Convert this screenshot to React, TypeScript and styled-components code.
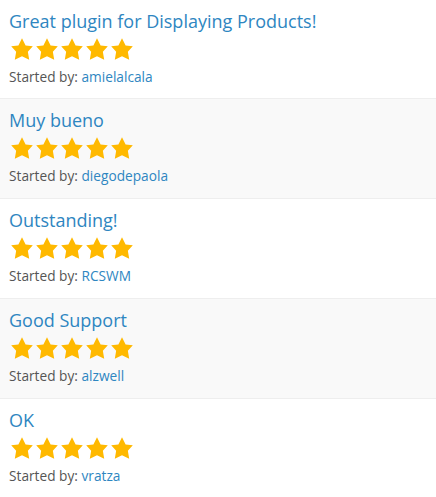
import * as React from 'react';
import styled, { createGlobalStyle } from 'styled-components';

const GlobalStyle = createGlobalStyle`
  html, body {
    margin: 0;
    padding: 0;
    background: #fff;
  }
  body {
    font-family: 'Open Sans', 'Noto Sans', sans-serif;
  }
`;

const ReviewList = styled('ul')`
  list-style: none;
  margin: 0;
  padding: 0;
  width: 436px;
`;

const ReviewItem = styled('li')`
  box-sizing: border-box;
  height: 100px;
  padding: 8px 9px 0;
  border-bottom: 1px solid #eee;
  &:first-child {
    height: 99px;
  }
  &:nth-child(even) {
    background: #f9f9f9;
  }
`;

const Title = styled('a')`
  display: block;
  font-size: 18px;
  line-height: 26px;
  color: #2e86c1;
  text-decoration: none;
`;

const Stars = styled('div')`
  display: flex;
  gap: 1px;
  margin: 3px 0 0 1px;
  height: 24px;
`;

const Byline = styled('p')`
  margin: 7px 0 0;
  font-size: 13.7px;
  line-height: 18px;
  color: #555;
`;

const Author = styled('a')`
  color: #2e86c1;
  text-decoration: none;
`;

const Star: React.FC = () => (
  <svg width="24" height="24" viewBox="0 0 20 20">
    <path
      fill="#ffb900"
      d="M10 1l3 6 6 .75-4.12 4.62L16 19l-6-3-6 3 1.13-6.63L1 7.75 7 7z"
    />
  </svg>
);

const reviews = [
  { title: 'Great plugin for Displaying Products!', author: 'amielalcala' },
  { title: 'Muy bueno', author: 'diegodepaola' },
  { title: 'Outstanding!', author: 'RCSWM' },
  { title: 'Good Support', author: 'alzwell' },
  { title: 'OK', author: 'vratza' },
];

const App: React.FC = () => (
  <>
    <GlobalStyle />
    <ReviewList>
      {reviews.map((r) => (
        <ReviewItem key={r.author}>
          <Title href="#">{r.title}</Title>
          <Stars>
            {[0, 1, 2, 3, 4].map((i) => (
              <Star key={i} />
            ))}
          </Stars>
          <Byline>
            Started by: <Author href="#">{r.author}</Author>
          </Byline>
        </ReviewItem>
      ))}
    </ReviewList>
  </>
);

export default App;
